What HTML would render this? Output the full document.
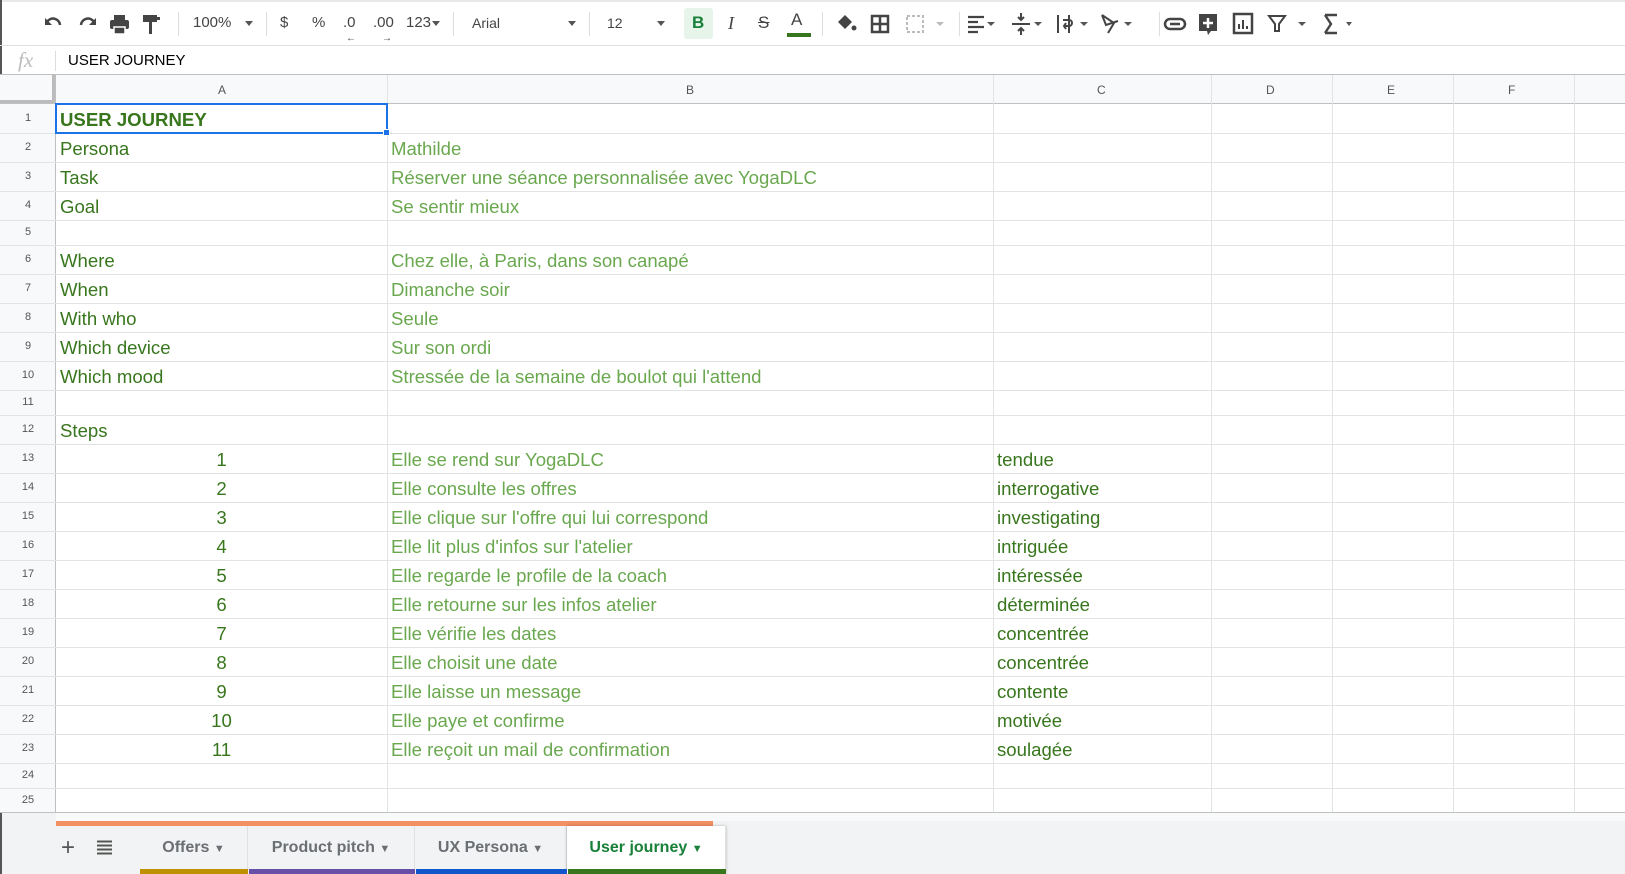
<!DOCTYPE html>
<html><head><meta charset="utf-8"><style>
*{box-sizing:border-box;margin:0;padding:0}
body{width:1625px;height:874px;overflow:hidden;background:#fff;font-family:"Liberation Sans",Arial,sans-serif;position:relative}
.a{position:absolute}
.tb{color:#444;font-size:15px;top:13px;height:20px;line-height:20px}
.sep{position:absolute;top:12px;width:1px;height:24px;background:#ddd}
.car{position:absolute;top:21px;width:0;height:0;border-left:4px solid transparent;border-right:4px solid transparent;border-top:5px solid #555}
.h{position:absolute;left:0;width:1625px;height:1px;background:#e2e3e3}
.v{position:absolute;top:75px;width:1px;height:738px;background:#e2e3e3}
.rn{position:absolute;left:0;width:56px;text-align:center;font-size:11px;color:#555}
.c{position:absolute;font-size:18.6px;white-space:nowrap;margin-top:1px}
.g1{color:#38761d}.g2{color:#6aa84f}
.tab{position:absolute;top:826px;height:48px;line-height:44px;font-size:16px;font-weight:bold;color:#6b6e72;text-align:center;border-right:1px solid #e0e0e0}
</style></head><body>
<div class="a" style="left:0;top:0;width:1625px;height:2px;background:#e8e8e8"></div>
<div class="a" style="left:0;top:0;width:2px;height:874px;background:#555"></div>
<svg class="a" style="left:40px;top:10px" width="130" height="28" viewBox="0 0 130 28">
<path d="M7 12 a7 7 0 0 1 13 3" fill="none" stroke="#444" stroke-width="2.5"/><path d="M5 8v7h7z" fill="#444"/>
<path d="M54 12 a7 7 0 0 0 -13 3" fill="none" stroke="#444" stroke-width="2.5"/><path d="M56 8v7h-7z" fill="#444"/>
<rect x="70" y="10" width="19" height="9" rx="2" fill="#444"/><rect x="74" y="5" width="11" height="5" fill="#444"/><rect x="74" y="17" width="11" height="7" fill="#444" stroke="#fff" stroke-width="1.5"/>
<rect x="103" y="5" width="14" height="7" fill="#444"/><rect x="117" y="7" width="3" height="3" fill="#444"/><rect x="109" y="12" width="3" height="12" fill="#444"/>
</svg>
<div class="sep" style="left:178px"></div>
<div class="a tb" style="left:193px">100%</div><div class="car" style="left:245px"></div>
<div class="sep" style="left:266px"></div>
<div class="a tb" style="left:280px">$</div><div class="a tb" style="left:312px">%</div>
<div class="a tb" style="left:343px">.0</div><div class="a tb" style="left:373px">.00</div>
<div class="a" style="left:346px;top:33px;font-size:10px;color:#444">←</div><div class="a" style="left:382px;top:33px;font-size:10px;color:#444">→</div>
<div class="a tb" style="left:406px">123</div><div class="car" style="left:432px"></div>
<div class="sep" style="left:453px"></div>
<div class="a tb" style="left:472px;font-size:14px">Arial</div><div class="car" style="left:568px"></div>
<div class="sep" style="left:589px"></div>
<div class="a tb" style="left:607px;font-size:14px">12</div><div class="car" style="left:657px"></div>
<div class="a" style="left:684px;top:8px;width:29px;height:31px;background:#e6f4ea;border-radius:3px"></div>
<div class="a tb" style="left:692px;font-weight:bold;color:#188038;font-size:17px">B</div>
<div class="a tb" style="left:728px;font-style:italic;font-size:18px;font-family:'Liberation Serif',serif">I</div>
<div class="a tb" style="left:758px;text-decoration:line-through;font-size:17px">S</div>
<div class="a tb" style="left:791px;top:10px;font-size:17px">A</div><div class="a" style="left:787px;top:33px;width:24px;height:4px;background:#38761d"></div>
<div class="sep" style="left:822px"></div>
<svg class="a" style="left:832px;top:10px" width="520" height="28" viewBox="0 0 520 28">
<path d="M6 12 l7 -7 l7 7 l-7 7z" fill="#444"/><circle cx="22" cy="18" r="2.5" fill="#444"/>
<path d="M40 6h16v16h-16zM48 6v16M40 14h16" fill="none" stroke="#444" stroke-width="2.5"/>
<path d="M75 6h16v16h-16z" fill="none" stroke="#bbb" stroke-width="2" stroke-dasharray="3 2"/><path d="M104 12l4 4 4-4z" fill="#bbb"/>
<path d="M136 7h16M136 12h10M136 17h16M136 22h10" stroke="#444" stroke-width="2.2"/><path d="M155 12l4 4 4-4z" fill="#555"/>
<path d="M180 14h18M189 3v7M189 18v7M186 7l3 3 3-3M186 21l3-3 3 3" stroke="#444" stroke-width="2" fill="none"/><path d="M202 12l4 4 4-4z" fill="#555"/>
<path d="M226 5v18M237 5v18M231 10h6a3 3 0 0 1 0 6h-4M234 13l-2 3 2 3" stroke="#444" stroke-width="2" fill="none"/><path d="M248 12l4 4 4-4z" fill="#555"/>
<path d="M270 5l12 8l-6 10M270 5l4 10l12 -4" stroke="#444" stroke-width="2" fill="none"/><path d="M292 12l4 4 4-4z" fill="#555"/>
<rect x="333" y="9" width="20" height="10" rx="5" fill="none" stroke="#444" stroke-width="2.5"/><path d="M338 14h10" stroke="#444" stroke-width="2.5"/>
<path d="M367 4h18v17h-6l-3 4-1-4h-8z" fill="#444"/><path d="M376 8v10M371 13h10" stroke="#fff" stroke-width="2.5"/>
<rect x="402" y="4" width="18" height="19" fill="none" stroke="#444" stroke-width="2.5"/><path d="M407 19v-5M411 19v-9M415 19v-3" stroke="#444" stroke-width="2"/>
<path d="M437 6h16l-6 8v7h-4v-7z" fill="none" stroke="#444" stroke-width="2"/><path d="M466 12l4 4 4-4z" fill="#555"/>
<path d="M493 5h12M493 23h12M493 5l6 9-6 9" stroke="#444" stroke-width="2.4" fill="none"/><path d="M514 12l3 4 3-4z" fill="#555"/>
</svg>
<div class="sep" style="left:959px"></div><div class="sep" style="left:1159px"></div>
<div class="a" style="left:0;top:45px;width:1625px;height:1px;background:#e0e0e0"></div>
<div class="a" style="left:18px;top:46px;font-family:'Liberation Serif',serif;font-style:italic;font-size:21px;color:#bbb;line-height:28px">fx</div>
<div class="a" style="left:55px;top:51px;width:1px;height:20px;background:#ddd"></div>
<div class="a" style="left:68px;top:46px;line-height:29px;font-size:15px;color:#000">USER JOURNEY</div>
<div class="a" style="left:0;top:74px;width:1625px;height:1px;background:#c0c0c0"></div>
<div class="a" style="left:0;top:75px;width:1625px;height:29px;background:#f8f9fa"></div>
<div class="a" style="left:0;top:104px;width:56px;height:709px;background:#f8f9fa"></div>
<div class="a" style="left:0;top:75px;width:56px;height:29px;border-right:4px solid #bbb;border-bottom:4px solid #bbb"></div>
<div class="a" style="left:0;top:103px;width:1625px;height:1px;background:#c0c0c0"></div>
<div class="a" style="left:55px;top:75px;width:1px;height:738px;background:#c0c0c0"></div>
<div class="a" style="top:76px;line-height:29px;font-size:12px;color:#555;left:218px">A</div>
<div class="a" style="top:76px;line-height:29px;font-size:12px;color:#555;left:686px">B</div>
<div class="a" style="top:76px;line-height:29px;font-size:12px;color:#555;left:1097px">C</div>
<div class="a" style="top:76px;line-height:29px;font-size:12px;color:#555;left:1266px">D</div>
<div class="a" style="top:76px;line-height:29px;font-size:12px;color:#555;left:1387px">E</div>
<div class="a" style="top:76px;line-height:29px;font-size:12px;color:#555;left:1508px">F</div>
<div class="v" style="left:387px"></div><div class="v" style="left:993px"></div><div class="v" style="left:1211px"></div>
<div class="v" style="left:1332px"></div><div class="v" style="left:1453px"></div><div class="v" style="left:1574px"></div>
<div class="h" style="top:133px"></div><div class="h" style="top:162px"></div><div class="h" style="top:191px"></div><div class="h" style="top:220px"></div>
<div class="h" style="top:245px"></div><div class="h" style="top:274px"></div><div class="h" style="top:303px"></div><div class="h" style="top:332px"></div>
<div class="h" style="top:361px"></div><div class="h" style="top:390px"></div><div class="h" style="top:415px"></div><div class="h" style="top:444px"></div>
<div class="h" style="top:473px"></div><div class="h" style="top:502px"></div><div class="h" style="top:531px"></div><div class="h" style="top:560px"></div>
<div class="h" style="top:589px"></div><div class="h" style="top:618px"></div><div class="h" style="top:647px"></div><div class="h" style="top:676px"></div>
<div class="h" style="top:705px"></div><div class="h" style="top:734px"></div><div class="h" style="top:763px"></div><div class="h" style="top:788px"></div>
<div class="h" style="top:812px;background:#c0c0c0"></div>
<div class="rn" style="top:104px;line-height:29px">1</div><div class="rn" style="top:133px;line-height:29px">2</div>
<div class="rn" style="top:162px;line-height:29px">3</div><div class="rn" style="top:191px;line-height:29px">4</div>
<div class="rn" style="top:220px;line-height:25px">5</div><div class="rn" style="top:245px;line-height:29px">6</div>
<div class="rn" style="top:274px;line-height:29px">7</div><div class="rn" style="top:303px;line-height:29px">8</div>
<div class="rn" style="top:332px;line-height:29px">9</div><div class="rn" style="top:361px;line-height:29px">10</div>
<div class="rn" style="top:390px;line-height:25px">11</div><div class="rn" style="top:415px;line-height:29px">12</div>
<div class="rn" style="top:444px;line-height:29px">13</div><div class="rn" style="top:473px;line-height:29px">14</div>
<div class="rn" style="top:502px;line-height:29px">15</div><div class="rn" style="top:531px;line-height:29px">16</div>
<div class="rn" style="top:560px;line-height:29px">17</div><div class="rn" style="top:589px;line-height:29px">18</div>
<div class="rn" style="top:618px;line-height:29px">19</div><div class="rn" style="top:647px;line-height:29px">20</div>
<div class="rn" style="top:676px;line-height:29px">21</div><div class="rn" style="top:705px;line-height:29px">22</div>
<div class="rn" style="top:734px;line-height:29px">23</div><div class="rn" style="top:763px;line-height:25px">24</div>
<div class="rn" style="top:788px;line-height:25px">25</div>
<div class="a" style="left:55px;top:103px;width:333px;height:31px;border:2px solid #1a73e8"></div>
<div class="a" style="left:383px;top:129px;width:7px;height:7px;background:#1a73e8;border:1px solid #fff"></div>
<div class="c g1" style="left:60px;top:104px;line-height:29px;font-weight:bold">USER JOURNEY</div>
<div class="c g1" style="left:60px;top:133px;line-height:29px">Persona</div>
<div class="c g1" style="left:60px;top:162px;line-height:29px">Task</div>
<div class="c g1" style="left:60px;top:191px;line-height:29px">Goal</div>
<div class="c g1" style="left:60px;top:245px;line-height:29px">Where</div>
<div class="c g1" style="left:60px;top:274px;line-height:29px">When</div>
<div class="c g1" style="left:60px;top:303px;line-height:29px">With who</div>
<div class="c g1" style="left:60px;top:332px;line-height:29px">Which device</div>
<div class="c g1" style="left:60px;top:361px;line-height:29px">Which mood</div>
<div class="c g1" style="left:60px;top:415px;line-height:29px">Steps</div>
<div class="c g2" style="left:391px;top:133px;line-height:29px">Mathilde</div>
<div class="c g2" style="left:391px;top:162px;line-height:29px">Réserver une séance personnalisée avec YogaDLC</div>
<div class="c g2" style="left:391px;top:191px;line-height:29px">Se sentir mieux</div>
<div class="c g2" style="left:391px;top:245px;line-height:29px">Chez elle, à Paris, dans son canapé</div>
<div class="c g2" style="left:391px;top:274px;line-height:29px">Dimanche soir</div>
<div class="c g2" style="left:391px;top:303px;line-height:29px">Seule</div>
<div class="c g2" style="left:391px;top:332px;line-height:29px">Sur son ordi</div>
<div class="c g2" style="left:391px;top:361px;line-height:29px">Stressée de la semaine de boulot qui l'attend</div>
<div class="c g1" style="left:56px;width:331px;text-align:center;top:444px;line-height:29px">1</div>
<div class="c g1" style="left:56px;width:331px;text-align:center;top:473px;line-height:29px">2</div>
<div class="c g1" style="left:56px;width:331px;text-align:center;top:502px;line-height:29px">3</div>
<div class="c g1" style="left:56px;width:331px;text-align:center;top:531px;line-height:29px">4</div>
<div class="c g1" style="left:56px;width:331px;text-align:center;top:560px;line-height:29px">5</div>
<div class="c g1" style="left:56px;width:331px;text-align:center;top:589px;line-height:29px">6</div>
<div class="c g1" style="left:56px;width:331px;text-align:center;top:618px;line-height:29px">7</div>
<div class="c g1" style="left:56px;width:331px;text-align:center;top:647px;line-height:29px">8</div>
<div class="c g1" style="left:56px;width:331px;text-align:center;top:676px;line-height:29px">9</div>
<div class="c g1" style="left:56px;width:331px;text-align:center;top:705px;line-height:29px">10</div>
<div class="c g1" style="left:56px;width:331px;text-align:center;top:734px;line-height:29px">11</div>
<div class="c g2" style="left:391px;top:444px;line-height:29px">Elle se rend sur YogaDLC</div>
<div class="c g2" style="left:391px;top:473px;line-height:29px">Elle consulte les offres</div>
<div class="c g2" style="left:391px;top:502px;line-height:29px">Elle clique sur l'offre qui lui correspond</div>
<div class="c g2" style="left:391px;top:531px;line-height:29px">Elle lit plus d'infos sur l'atelier</div>
<div class="c g2" style="left:391px;top:560px;line-height:29px">Elle regarde le profile de la coach</div>
<div class="c g2" style="left:391px;top:589px;line-height:29px">Elle retourne sur les infos atelier</div>
<div class="c g2" style="left:391px;top:618px;line-height:29px">Elle vérifie les dates</div>
<div class="c g2" style="left:391px;top:647px;line-height:29px">Elle choisit une date</div>
<div class="c g2" style="left:391px;top:676px;line-height:29px">Elle laisse un message</div>
<div class="c g2" style="left:391px;top:705px;line-height:29px">Elle paye et confirme</div>
<div class="c g2" style="left:391px;top:734px;line-height:29px">Elle reçoit un mail de confirmation</div>
<div class="c g1" style="left:997px;top:444px;line-height:29px">tendue</div>
<div class="c g1" style="left:997px;top:473px;line-height:29px">interrogative</div>
<div class="c g1" style="left:997px;top:502px;line-height:29px">investigating</div>
<div class="c g1" style="left:997px;top:531px;line-height:29px">intriguée</div>
<div class="c g1" style="left:997px;top:560px;line-height:29px">intéressée</div>
<div class="c g1" style="left:997px;top:589px;line-height:29px">déterminée</div>
<div class="c g1" style="left:997px;top:618px;line-height:29px">concentrée</div>
<div class="c g1" style="left:997px;top:647px;line-height:29px">concentrée</div>
<div class="c g1" style="left:997px;top:676px;line-height:29px">contente</div>
<div class="c g1" style="left:997px;top:705px;line-height:29px">motivée</div>
<div class="c g1" style="left:997px;top:734px;line-height:29px">soulagée</div>
<div class="a" style="left:2px;top:813px;width:1623px;height:61px;background:#f1f3f4"></div>
<div class="a" style="left:56px;top:813px;width:1569px;height:8px;background:#f8f9fa"></div>
<div class="a" style="left:56px;top:821px;width:657px;height:5px;background:#f28f63"></div>
<div class="a" style="left:61px;top:833px;font-size:24px;color:#555;line-height:30px">+</div>
<svg class="a" style="left:97px;top:840px" width="15" height="16"><path d="M0 1.5h15M0 5.5h15M0 9.5h15M0 13.5h15" stroke="#555" stroke-width="2"/></svg>
<div class="tab" style="left:140px;width:108px">Offers <span style="font-size:11px">▼</span></div>
<div class="tab" style="left:248px;width:167px">Product pitch <span style="font-size:11px">▼</span></div>
<div class="tab" style="left:415px;width:152px">UX Persona <span style="font-size:11px">▼</span></div>
<div class="tab" style="left:567px;width:159px;background:#fff;color:#188038;box-shadow:0 0 3px rgba(0,0,0,.25)">User journey <span style="font-size:11px">▼</span></div>
<div class="a" style="left:140px;top:869px;width:108px;height:5px;background:#bf9000"></div>
<div class="a" style="left:249px;top:869px;width:166px;height:5px;background:#674ea7"></div>
<div class="a" style="left:416px;top:869px;width:151px;height:5px;background:#1155cc"></div>
<div class="a" style="left:568px;top:869px;width:158px;height:5px;background:#38761d"></div>
</body></html>
